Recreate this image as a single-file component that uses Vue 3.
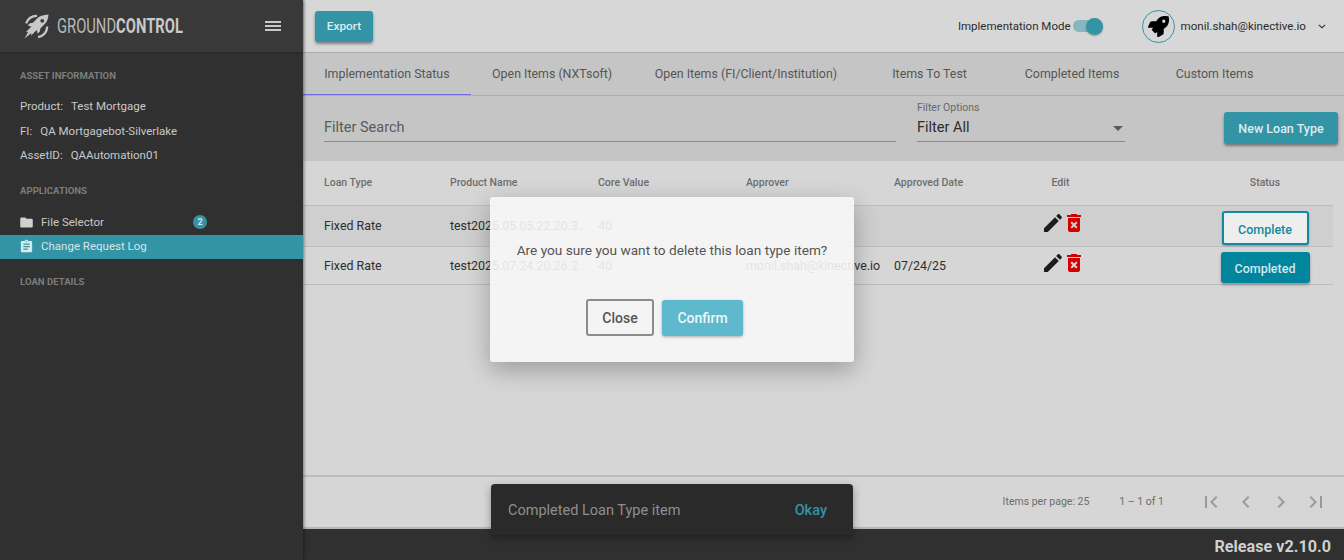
<script setup>
const tabs = ['Implementation Status', 'Open Items (NXTsoft)', 'Open Items (FI/Client/Institution)', 'Items To Test', 'Completed Items', 'Custom Items']
const pencil = 'M3 17.25V21h3.75L17.81 9.94l-3.75-3.75L3 17.25zM20.71 7.04c.39-.39.39-1.02 0-1.41l-2.34-2.34c-.39-.39-1.02-.39-1.41 0l-1.83 1.83 3.75 3.75 1.83-1.83z'
const trash = 'M6 19c0 1.1.9 2 2 2h8c1.1 0 2-.9 2-2V7H6v12zm2.46-7.12l1.41-1.41L12 12.59l2.12-2.12 1.41 1.41L13.41 14l2.12 2.12-1.41 1.41L12 15.41l-2.12 2.12-1.41-1.41L10.59 14l-2.13-2.12zM15.5 4l-1-1h-5l-1 1H5v2h14V4z'
const pager = [
  'M18.41 16.59L13.82 12l4.59-4.59L17 6l-6 6 6 6zM6 6h2v12H6z',
  'M15.41 7.41L14 6l-6 6 6 6 1.41-1.41L10.83 12z',
  'M10 6L8.59 7.41 13.17 12l-4.58 4.59L10 18l6-6z',
  'M5.59 7.41L10.18 12l-4.59 4.59L7 18l6-6-6-6zM16 6h2v12h-2z'
]
</script>

<template>
  <div class="page">
    <aside class="side">
      <div class="brand">
        <svg class="logo" viewBox="0 0 24 24" width="25" height="25" fill="none">
          <path d="M23.500.500c-5 .3-9 1.500-11.500 4.200L8.600 8.300l-3 .5L3.500 11l3.600.9-5.400 5.700 2.400-.6-3.600 6.500 6.600-5.200-.4 2.500 5.500-5.400 1 3.500 2-2 .5-3.100 3.500-3.400C22 8 23.200 5 23.500.500z" fill="#c8c8c8"/>
          <circle cx="17.500" cy="6.500" r="1.800" fill="#383838"/>
          <path d="M12.500 1.800A10.500 10.500 0 0 0 2 9M22.300 12a10.500 10.500 0 0 1-8.800 10.300" stroke="#c8c8c8" stroke-width="2.200"/>
        </svg>
        <div class="wordbox"><div class="word">GROUND<b>CONTROL</b></div></div>
        <div class="burger"><i></i><i></i><i></i></div>
      </div>
      <h4 class="sec first">ASSET INFORMATION</h4>
      <div class="info">
        <p>Product:<span>Test Mortgage</span></p>
        <p>FI:<span>QA Mortgagebot-Silverlake</span></p>
        <p>AssetID:<span>QAAutomation01</span></p>
      </div>
      <h4 class="sec apps">APPLICATIONS</h4>
      <div class="nav">
        <svg viewBox="0 0 24 24" width="15" height="15"><path fill="#d0d0d0" d="M10 4H4c-1.100 0-2 .9-2 2v12c0 1.100.9 2 2 2h16c1.100 0 2-.9 2-2V8c0-1.100-.9-2-2-2h-8l-2-2z"/></svg>
        <span>File Selector</span>
        <em>2</em>
      </div>
      <div class="nav active">
        <svg viewBox="0 0 24 24" width="15" height="15"><path fill="#d9e9ec" d="M19 3h-4.180C14.400 1.840 13.300 1 12 1c-1.300 0-2.400.84-2.820 2H5c-1.100 0-2 .9-2 2v14c0 1.100.9 2 2 2h14c1.100 0 2-.9 2-2V5c0-1.100-.9-2-2-2zm-7 0c.55 0 1 .45 1 1s-.45 1-1 1-1-.45-1-1 .45-1 1-1zm2 14H7v-2h7v2zm3-4H7v-2h10v2zm0-4H7V7h10v2z"/></svg>
        <span>Change Request Log</span>
      </div>
      <h4 class="sec loan">LOAN DETAILS</h4>
    </aside>

    <main class="main">
      <header class="top">
        <button class="btn export">Export</button>
        <div class="grow"></div>
        <span class="mode">Implementation Mode</span>
        <div class="toggle"><i></i></div>
        <div class="avatar">
          <svg viewBox="0 0 512 512" width="21" height="21">
            <path fill="#000" d="M505.05 19.1a15.89 15.89 0 0 0-12.2-12.2C460.65 0 435.46 0 410.36 0c-103.2 0-165.1 55.2-211.29 128H94.87A48 48 0 0 0 52 154.49l-49.42 98.8A24 24 0 0 0 24.07 288h103.77l-22.47 22.47a32 32 0 0 0 0 45.25l50.9 50.91a32 32 0 0 0 45.26 0L224 384.16V488a24 24 0 0 0 34.7 21.49l98.7-49.39a47.91 47.91 0 0 0 26.5-42.9V312.79c72.59-46.3 128-108.4 128-211.09.1-25.2.1-50.4-6.85-82.6zM384 168a40 40 0 1 1 40-40 40 40 0 0 1-40 40z"/>
          </svg>
        </div>
        <span class="user">monil.shah@kinective.io</span>
        <svg class="caret" viewBox="0 0 10 6" width="8" height="5"><path d="M1 1l4 3.500L9 1" fill="none" stroke="#333" stroke-width="1.300"/></svg>
      </header>

      <nav class="tabs">
        <div v-for="(t, i) in tabs" :key="t" class="tab" :class="{ on: i === 0 }">{{ t }}</div>
      </nav>

      <section class="filters">
        <div class="field search">Filter Search</div>
        <div class="field select">
          <label>Filter Options</label>
          <div class="val">Filter All<i></i></div>
        </div>
        <button class="btn newloan">New Loan Type</button>
      </section>

      <section class="table">
        <div class="row head">
          <div>Loan Type</div><div>Product Name</div><div>Core Value</div><div>Approver</div><div>Approved Date</div><div class="c">Edit</div><div class="c st">Status</div>
        </div>
        <div class="row r1">
          <div>Fixed Rate</div><div>test2025.05.05.22.20.3...</div><div>40</div><div></div><div></div>
          <div class="icons">
            <svg viewBox="0 0 24 24" width="24" height="24"><path :d="pencil" fill="#1c1c1c"/></svg>
            <svg viewBox="0 0 24 24" width="24" height="24"><path :d="trash" fill="#d40000"/></svg>
          </div>
          <div class="st"><button class="stat outline">Complete</button></div>
        </div>
        <div class="row r2">
          <div>Fixed Rate</div><div>test2025.07.24.20.26.2...</div><div>40</div><div>monil.shah@kinective.io</div><div>07/24/25</div>
          <div class="icons">
            <svg viewBox="0 0 24 24" width="24" height="24"><path :d="pencil" fill="#1c1c1c"/></svg>
            <svg viewBox="0 0 24 24" width="24" height="24"><path :d="trash" fill="#d40000"/></svg>
          </div>
          <div class="st"><button class="stat solid">Completed</button></div>
        </div>
      </section>

      <section class="pager">
        <span class="ipp">Items per page: 25</span>
        <span class="range">1 – 1 of 1</span>
        <svg v-for="p in pager" :key="p" viewBox="0 0 24 24" width="24" height="24" class="pg"><path :d="p" fill="#9a9a9a"/></svg>
      </section>

      <footer class="foot">Release v2.10.0</footer>
    </main>

    <div class="modal">
      <p>Are you sure you want to delete this loan type item?</p>
      <div class="acts">
        <button class="close">Close</button>
        <button class="confirm">Confirm</button>
      </div>
    </div>

    <div class="snack">
      <span>Completed Loan Type item</span>
      <b>Okay</b>
    </div>
  </div>
</template>

<style>
html, body { margin: 0; overflow: hidden; }
</style>

<style scoped>
.page {
  position: relative;
  display: flex;
  width: 1344px;
  height: 560px;
  overflow: hidden;
  font-family: Roboto, "Liberation Sans", sans-serif;
  font-size: 13px;
  color: #2e2e2e;
}
.side {
  width: 303px;
  flex: none;
  background: #303030;
  color: #c9c9c9;
  box-shadow: 1px 0 3px rgba(0, 0, 0, .45);
  z-index: 1;
}
.brand {
  height: 52px;
  background: #393939;
  display: flex;
  align-items: center;
  padding-left: 24px;
  box-shadow: 0 1px 2px rgba(0, 0, 0, .25);
}
.logo { flex: none; }
.wordbox { width: 125px; margin-left: 8px; overflow: visible; white-space: nowrap; }
.word {
  display: inline-block;
  font-size: 20.500px;
  color: #b8b8b8;
  transform: scaleX(.72);
  transform-origin: left center;
}
.word b { color: #c9c9c9; }
.burger { margin-left: auto; margin-right: 22px; width: 16px; display: flex; flex-direction: column; gap: 2px; }
.burger i { height: 2px; background: #c8c8c8; display: block; }
.sec {
  margin: 0;
  padding-left: 20px;
  font-size: 9.600px;
  font-weight: 700;
  line-height: 12px;
  color: #7c7c7c;
}
.first { margin-top: 18px; }
.apps { margin-top: 17px; }
.loan { margin-top: 17px; }
.info { margin-top: 12px; }
.info p { margin: 0; padding-left: 20px; height: 24.500px; line-height: 24.500px; font-size: 11.500px; }
.info span { margin-left: 8px; }
.nav {
  height: 25px;
  display: flex;
  align-items: center;
  padding-left: 19px;
  font-size: 11.500px;
  position: relative;
}
.apps + .nav { margin-top: 13px; }
.nav span { margin-left: 7px; }
.nav em {
  position: absolute;
  left: 193px;
  top: 5px;
  width: 14px;
  height: 14px;
  border-radius: 50%;
  background: #3394a6;
  color: #d5e5e8;
  font-style: normal;
  font-weight: 700;
  font-size: 9px;
  line-height: 14px;
  text-align: center;
}
.nav.active { background: #3394a6; color: #d4e6ea; height: 24px; box-sizing: border-box; padding-bottom: 1px; }
.main { flex: 1; display: flex; flex-direction: column; min-width: 0; background: #d6d6d6; }
.top {
  height: 52px;
  flex: none;
  display: flex;
  align-items: center;
  padding: 0 18px 0 12px;
  background: #d7d7d7;
  border-bottom: 1px solid #aeaeae;
}
.grow { flex: 1; }
.btn {
  border: 0;
  border-radius: 3px;
  background: #3394a6;
  color: #dcecef;
  font-family: inherit;
  font-weight: 500;
  box-shadow: 0 2px 3px rgba(0, 0, 0, .4);
  padding: 0;
}
.export { width: 58px; height: 31px; font-size: 11.800px; }
.mode { font-size: 11.500px; color: #2c2c2c; }
.toggle { width: 30px; height: 12px; border-radius: 6px; background: #86b7c1; margin-left: 2px; position: relative; }
.toggle i {
  position: absolute;
  right: 0;
  top: -2px;
  width: 17px;
  height: 17px;
  border-radius: 50%;
  background: #3394a6;
  box-shadow: 0 1px 2px rgba(0, 0, 0, .3);
}
.avatar {
  width: 31px;
  height: 31px;
  margin-left: 39px;
  border: 1px solid #3394a6;
  border-radius: 50%;
  display: flex;
  align-items: center;
  justify-content: center;
}
.user { font-size: 11.600px; margin-left: 6px; color: #2a2a2a; }
.caret { margin-left: 12px; }
.tabs {
  height: 42px;
  flex: none;
  display: flex;
  background: #c5c5c5;
  border-bottom: 1px solid #aeaeae;
}
.tab {
  box-sizing: border-box;
  min-width: 142.500px;
  padding: 0 21.250px;
  height: 42px;
  line-height: 41px;
  font-size: 12.400px;
  text-align: center;
  color: #555;
  white-space: nowrap;
}
.tab.on { border-bottom: 1px solid #6f6ae0; }
.filters {
  height: 65px;
  flex: none;
  background: #c5c5c5;
  display: flex;
  padding: 0 6px 0 21px;
  position: relative;
}
.field { border-bottom: 1px solid #8a8a8a; height: 46px; box-sizing: border-box; color: #5a5a5a; }
.search { width: 572px; font-size: 14.500px; line-height: 64px; overflow: hidden; }
.select { width: 208px; margin-left: 21px; }
.select label { display: block; font-size: 10.500px; line-height: 12px; color: #676767; padding-top: 6px; }
.val { font-size: 14.500px; color: #2c2c2c; line-height: 22px; display: flex; align-items: center; justify-content: space-between; padding-top: 3px; }
.val i { width: 0; height: 0; border: 5px solid transparent; border-top-color: #5a5a5a; border-bottom: 0; margin-right: 2px; }
.newloan { width: 114px; height: 32px; margin: 16px 0 0 auto; font-size: 12.500px; }
.table { flex: 1; min-height: 0; background: #d6d6d6; padding-right: 11px; }
.row {
  display: grid;
  grid-template-columns: 126px 148px 148px 148px 148px 37px 1fr;
  padding-left: 21px;
  align-items: center;
  border-bottom: 1px solid #bdbdbd;
  font-size: 12.400px;
  white-space: nowrap;
}
.head { height: 45px; font-size: 10.500px; font-weight: 500; color: #6e6e6e; padding-bottom: 2px; box-sizing: border-box; }
.c { text-align: center; }
.st { padding-left: 118px; text-align: center; width: 136px; }
.r1 { height: 41px; background: #cfcfcf; padding-bottom: 2px; box-sizing: border-box; }
.r2 { height: 37px; }
.icons { display: flex; align-items: center; margin-left: -1px; margin-top: -5px; }
.icons svg { flex: none; }
.icons svg + svg { margin-left: -3px; }
.stat { font-family: inherit; font-weight: 500; font-size: 12.500px; padding: 0; border-radius: 3px; }
.outline { width: 87px; height: 34px; border: 2px solid #1289a0; background: #eeeeee; color: #1289a0; margin-top: 5px; box-shadow: 0 1px 2px rgba(0, 0, 0, .3); padding-top: 2px; }
.solid { width: 89px; height: 31px; border: 0; background: #00859c; color: #d8e8eb; box-shadow: 0 2px 3px rgba(0, 0, 0, .3); margin-top: 3px; padding-top: 3px; }
.pager {
  height: 54px;
  flex: none;
  box-sizing: border-box;
  border-top: 2px solid #bdbdbd;
  border-bottom: 2px solid #b5b5b5;
  display: flex;
  align-items: center;
  justify-content: flex-end;
  font-size: 10.500px;
  color: #6c6c6c;
  padding: 0 16.500px 2px 0;
}
.range { margin: 0 34.500px 0 30px; }
.pg { margin-left: 11px; margin-top: 1px; }
.pg:first-of-type { margin-left: 0; }
.foot {
  height: 31px;
  flex: none;
  box-sizing: border-box;
  background: #303030;
  color: #cfcfcf;
  font-size: 16.200px;
  font-weight: 700;
  text-align: right;
  line-height: 31px;
  padding: 2px 13px 0 0;
}
.modal {
  position: absolute;
  left: 490px;
  top: 197px;
  width: 364px;
  height: 165px;
  background: rgba(247, 247, 247, .9);
  border-radius: 3px;
  box-shadow: 0 8px 24px rgba(0, 0, 0, .28);
  z-index: 3;
  display: flex;
  flex-direction: column;
  align-items: center;
}
.modal p { margin: 45px 0 0; font-size: 13.650px; line-height: 16px; color: #555; white-space: nowrap; }
.acts { display: flex; gap: 8px; margin: 41px 15px 0 0; align-items: center; }
.close, .confirm { font-family: inherit; font-weight: 500; font-size: 14px; border-radius: 3px; padding: 0; }
.close { width: 68px; height: 37px; background: transparent; border: 2px solid #8c8c8c; color: #555; }
.confirm { width: 81px; height: 36px; border: 0; background: #5db9cb; color: #edf7f9; box-shadow: 0 1px 3px rgba(0, 0, 0, .3); }
.snack {
  position: absolute;
  left: 491px;
  top: 484px;
  width: 362px;
  height: 51px;
  border-radius: 4px;
  background: #2a2a2a;
  box-shadow: 0 3px 8px rgba(0, 0, 0, .35);
  z-index: 3;
  display: flex;
  align-items: center;
  justify-content: space-between;
  padding: 1px 26px 0 17px;
  box-sizing: border-box;
  font-size: 14.500px;
  color: #8f8f8f;
}
.snack b { font-weight: 500; color: #3394a6; }
</style>
